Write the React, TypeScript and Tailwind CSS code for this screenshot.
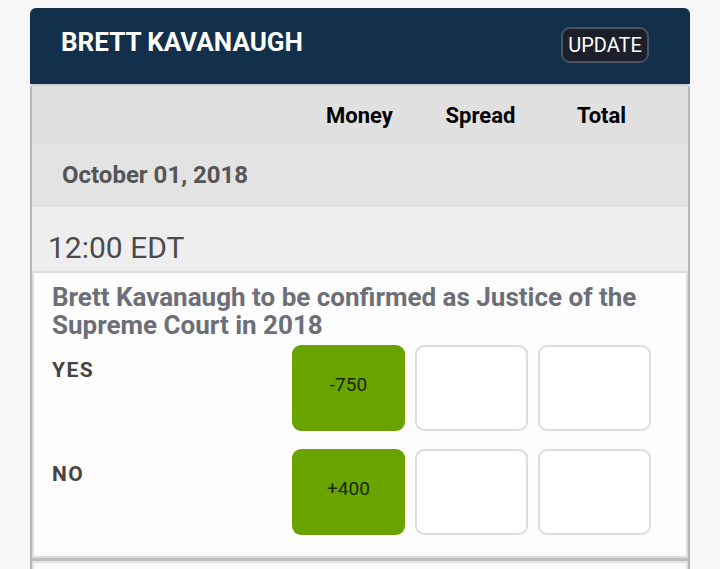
const columns = ["Money", "Spread", "Total"];

type Outcome = {
  label: string;
  money: string;
};

const outcomes: Outcome[] = [
  { label: "YES", money: "-750" },
  { label: "NO", money: "+400" },
];

const OddsRow = ({ outcome }: { outcome: Outcome }) => (
  <div className="flex items-start">
    <div className="flex-1 mt-[13px] text-[21px] leading-[24px] font-bold tracking-[1.5px] text-[#444444]">
      {outcome.label}
    </div>
    <div className="flex gap-[10px]">
      <button className="w-[113px] h-[86px] rounded-[9px] bg-[#69a300] flex items-center justify-center pb-[6px] text-[19px] text-[#1b2610]">
        {outcome.money}
      </button>
      <button className="w-[113px] h-[86px] rounded-[9px] bg-white border-2 border-[#dddddd]" />
      <button className="w-[113px] h-[86px] rounded-[9px] bg-white border-2 border-[#dddddd]" />
    </div>
  </div>
);

export default function App() {
  return (
    <div
      className="min-h-screen bg-[#f7f7f7] pt-[8px] px-[30px]"
      style={{ fontFamily: "Roboto, 'Liberation Sans', sans-serif" }}
    >
      <div className="h-[76px] bg-[#12304b] rounded-t-[6px] flex justify-between items-start pt-[19px] pl-[31px] pr-[41px]">
        <h1 className="text-[26px] leading-[30px] font-bold text-white">BRETT KAVANAUGH</h1>
        <button className="h-[36px] w-[88px] rounded-[9px] bg-[#1c1f2a] border-2 border-[#4b5261] text-white text-[20px] leading-none">
          UPDATE
        </button>
      </div>

      <div className="border-2 border-[#b9b9b9] border-t-[#cfcfcf] rounded-t-[4px] bg-[#fafafa]">
        <div className="h-[59px] bg-[#e0e0e0] flex justify-end items-center pr-[26px]">
          {columns.map((c) => (
            <div key={c} className="w-[121px] text-center text-[22px] font-bold text-black">
              {c}
            </div>
          ))}
        </div>

        <div className="h-[62px] bg-[#e3e3e3] flex items-center pl-[30px] pb-[2px]">
          <span className="text-[24px] font-bold text-[#555555]">October 01, 2018</span>
        </div>

        <div className="h-[64px] bg-[#eeeeee] pl-[16px] pt-[23px]">
          <span className="block text-[30px] leading-[36px] text-[#4a4a4a]">12:00 EDT</span>
        </div>

        <div className="bg-[#fdfdfd] border-2 border-[#dddddd] pl-[18px] pr-[35px] pt-[10px] pb-[21px]">
          <p className="text-[26px] leading-[28px] font-bold text-[#6c6f78] mb-[6px]">
            Brett Kavanaugh to be confirmed as Justice of the Supreme Court in 2018
          </p>
          <div className="flex flex-col gap-[18px]">
            {outcomes.map((o) => (
              <OddsRow key={o.label} outcome={o} />
            ))}
          </div>
        </div>

        <div className="h-[3px] bg-[#bcbcbc]" />
        <div className="h-[20px] bg-[#fbfbfb] border-2 border-[#e2e2e2]" />
      </div>
    </div>
  );
}
